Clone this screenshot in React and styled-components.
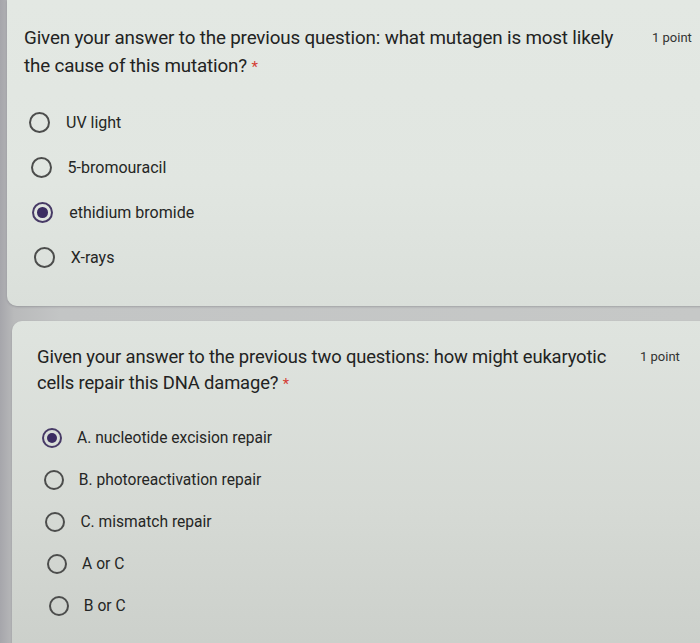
import React from 'react';
import styled, { createGlobalStyle } from 'styled-components';

const questions = [
  {
    title: 'Given your answer to the previous question: what mutagen is most likely the cause of this mutation?',
    points: '1 point',
    options: ['UV light', '5-bromouracil', 'ethidium bromide', 'X-rays'],
    checked: 2
  },
  {
    title: 'Given your answer to the previous two questions: how might eukaryotic cells repair this DNA damage?',
    points: '1 point',
    options: [
      'A. nucleotide excision repair',
      'B. photoreactivation repair',
      'C. mismatch repair',
      'A or C',
      'B or C'
    ],
    checked: 0
  }
];

// per card sizing, the photo is a little closer at the top
const looks = [
  { left: 7, top: 0, pad: '24px 0 26px 17px', titleSize: 18.8, titleLine: 28, titleWidth: 603, optSize: 16, row: 45, radio: 21, list: 19, textGap: 16, lean: 1.6, pointsLeft: 25, bg: 'linear-gradient(180deg, #e3e8e3 0%, #e1e6e1 60%, #dadfda 100%)' },
  { left: 12, top: 15, pad: '23px 0 30px 25px', titleSize: 18.4, titleLine: 26, titleWidth: 586, optSize: 15.6, row: 42, radio: 20, list: 20, textGap: 15, lean: 1.7, pointsLeft: 17, bg: 'linear-gradient(180deg, #dfe4df 0%, #d6dad5 55%, #cbcfca 100%)' }
];

const GlobalStyle = createGlobalStyle`
  html, body {
    margin: 0;
    padding: 0;
  }
  body {
    background: linear-gradient(90deg, #a6a6ab 0px, #b9babb 14px, #c3c5c5 60px, #c6c8c7 100%);
    font-family: Roboto, "Liberation Sans", Arial, sans-serif;
  }
`;

const Page = styled.div`
  width: 700px;
  height: 643px;
  overflow: hidden;
  display: flex;
  flex-direction: column;
`;

const Card = styled.section`
  margin-left: ${p => p.$look.left}px;
  margin-top: ${p => p.$look.top}px;
  margin-right: -30px;
  padding: ${p => p.$look.pad};
  background: ${p => p.$look.bg};
  border-radius: ${p => (p.$look.top === 0 ? '0 0 10px 10px' : '10px 10px 0 0')};
  box-shadow: 0 1px 2px rgba(60, 60, 70, 0.25);
  flex-shrink: 0;
  &:last-child {
    flex: 1;
  }
`;

const Header = styled.div`
  display: flex;
  align-items: flex-start;
`;

const Title = styled.h2`
  margin: 0;
  width: ${p => p.$look.titleWidth}px;
  font-size: ${p => p.$look.titleSize}px;
  line-height: ${p => p.$look.titleLine}px;
  font-weight: 400;
  color: #222322;
  letter-spacing: -0.15px;
`;

const Star = styled.span`
  color: #d43c33;
  font-size: 0.8em;
`;

const Points = styled.span`
  margin-left: ${p => p.$look.pointsLeft}px;
  font-size: 13px;
  line-height: ${p => p.$look.titleLine}px;
  color: #323332;
  white-space: nowrap;
`;

const List = styled.div`
  margin-top: ${p => p.$look.list}px;
  display: flex;
  flex-direction: column;
`;

const Row = styled.label`
  display: flex;
  align-items: center;
  height: ${p => p.$look.row}px;
  padding-left: ${p => p.$shift}px;
  font-size: ${p => p.$look.optSize}px;
  color: #252625;
`;

const Radio = styled.span`
  box-sizing: border-box;
  width: ${p => p.$size}px;
  height: ${p => p.$size}px;
  border-radius: 50%;
  border: 2px solid ${p => (p.$on ? '#473a66' : '#4c4d4c')};
  display: flex;
  align-items: center;
  justify-content: center;
  flex-shrink: 0;
  margin-right: ${p => p.$gap}px;
  &::after {
    content: '';
    display: ${p => (p.$on ? 'block' : 'none')};
    width: ${p => p.$size / 2}px;
    height: ${p => p.$size / 2}px;
    border-radius: 50%;
    background: #3b2c62;
  }
`;

export default function App() {
  return (
    <>
      <GlobalStyle />
      <Page>
        {questions.map((q, qi) => {
          const look = looks[qi];
          return (
            <Card key={qi} $look={look}>
              <Header>
                <Title $look={look}>
                  {q.title} <Star>*</Star>
                </Title>
                <Points $look={look}>{q.points}</Points>
              </Header>
              <List $look={look}>
                {q.options.map((opt, i) => (
                  <Row key={opt} $look={look} $shift={5 + i * look.lean}>
                    <Radio $on={i === q.checked} $size={look.radio} $gap={look.textGap} />
                    {opt}
                  </Row>
                ))}
              </List>
            </Card>
          );
        })}
      </Page>
    </>
  );
}
